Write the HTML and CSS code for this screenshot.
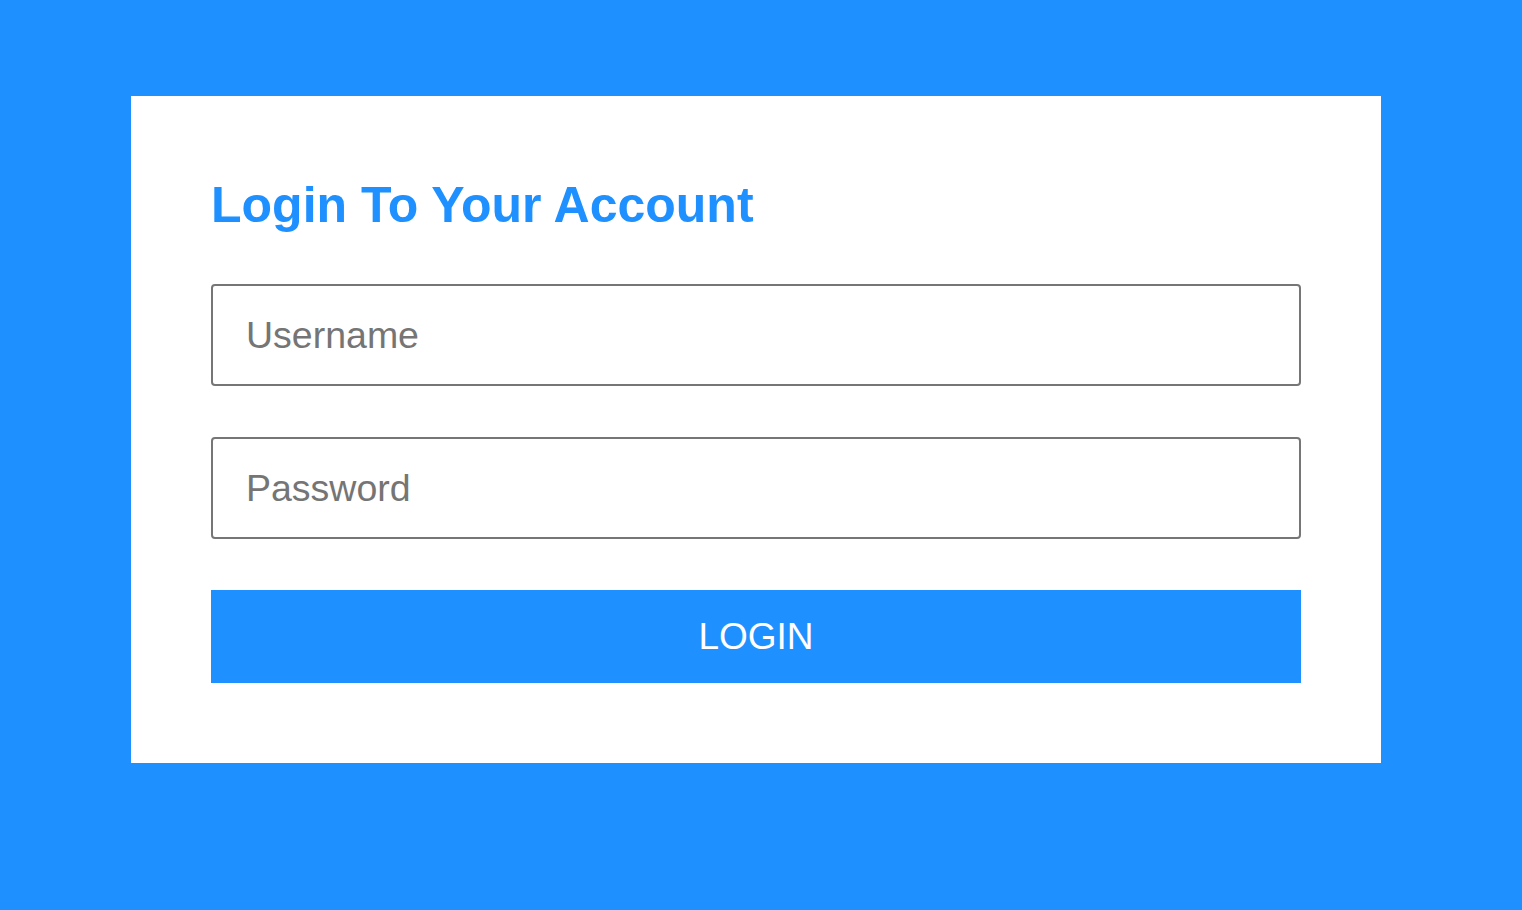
FILE: index.html
```html
<!DOCTYPE html>
<html lang="en">
<head>
<meta charset="utf-8">
<title>Login</title>
<link rel="stylesheet" href="styles.css">
</head>
<body>
<div class="page">
  <form class="card">
    <h1 class="title">Login To Your Account</h1>
    <input class="field" type="text" placeholder="Username">
    <input class="field" type="password" placeholder="Password">
    <button class="btn" type="button">LOGIN</button>
  </form>
</div>
</body>
</html>
```
FILE: styles.css
```css
html, body {
  margin: 0;
  padding: 0;
  background: #1e90ff;
  height: 100%;
}
body {
  font-family: "Liberation Sans", Arial, sans-serif;
}
.page {
  display: flex;
  padding: 96px 0 0 131px;
}
.card {
  width: 1250px;
  box-sizing: border-box;
  background: #ffffff;
  padding: 80px;
  display: flex;
  flex-direction: column;
  margin: 0;
}
.title {
  margin: 0 0 50px 0;
  font-size: 50px;
  line-height: 58px;
  font-weight: bold;
  color: #1e90ff;
}
.field {
  display: block;
  box-sizing: border-box;
  width: 1090px;
  height: 102px;
  margin: 0 0 51px 0;
  padding: 0 33px;
  border: 2px solid #767676;
  border-radius: 4px;
  font-family: "Liberation Sans", Arial, sans-serif;
  font-size: 37.5px;
  color: #333;
  background: #fff;
  outline: none;
}
.field::placeholder {
  color: #757575;
  opacity: 1;
}
.btn {
  display: block;
  width: 1090px;
  height: 93px;
  border: none;
  border-radius: 0;
  background: #1e90ff;
  color: #ffffff;
  font-family: "Liberation Sans", Arial, sans-serif;
  font-size: 37px;
  padding: 0;
  cursor: pointer;
}
```
